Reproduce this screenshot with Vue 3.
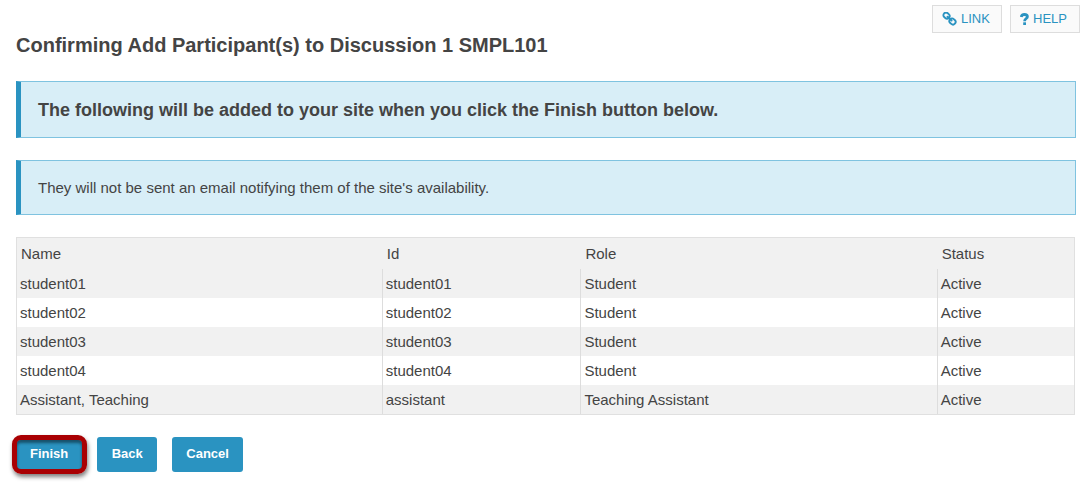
<script setup>
const columns = ['Name', 'Id', 'Role', 'Status']

const participants = [
  { name: 'student01', id: 'student01', role: 'Student', status: 'Active' },
  { name: 'student02', id: 'student02', role: 'Student', status: 'Active' },
  { name: 'student03', id: 'student03', role: 'Student', status: 'Active' },
  { name: 'student04', id: 'student04', role: 'Student', status: 'Active' },
  { name: 'Assistant, Teaching', id: 'assistant', role: 'Teaching Assistant', status: 'Active' }
]
</script>

<template>
  <main class="page">
    <header class="top">
      <h1 class="title">Confirming Add Participant(s) to Discussion 1 SMPL101</h1>
      <nav class="tools">
        <a class="tool" href="#link">
          <svg class="icon" width="15" height="15" viewBox="0 0 15 15" fill="none" stroke="currentColor" stroke-width="1.9" aria-hidden="true">
            <rect x="1.300" y="1" width="6.400" height="5.200" rx="2.500" transform="rotate(42 4.500 3.600)" />
            <rect x="7.300" y="6.900" width="6.400" height="5.200" rx="2.500" transform="rotate(42 10.500 9.500)" />
            <path d="M5.500 4.700l4.100 3.800" stroke-linecap="round" />
          </svg>
          <span>LINK</span>
        </a>
        <a class="tool" href="#help">
          <svg class="icon" width="9" height="13" viewBox="0 0 9 13" fill="none" stroke="currentColor" stroke-width="2.8" aria-hidden="true">
            <path d="M1.200 4C1.600 2.300 2.700 1.500 4.300 1.500c1.800 0 3.100.9 3.100 2.300C7.400 5.500 4.600 5.600 4.600 8.200" />
            <path d="M4.600 9.300v2.700" />
          </svg>
          <span>HELP</span>
        </a>
      </nav>
    </header>

    <section class="notice">
      <h2 class="lead">The following will be added to your site when you click the Finish button below.</h2>
    </section>
    <section class="notice">
      <p class="detail">They will not be sent an email notifying them of the site's availability.</p>
    </section>

    <table class="list">
      <colgroup>
        <col class="col-name" />
        <col class="col-id" />
        <col class="col-role" />
        <col class="col-status" />
      </colgroup>
      <thead>
        <tr>
          <th v-for="column in columns" :key="column" scope="col">{{ column }}</th>
        </tr>
      </thead>
      <tbody>
        <tr v-for="person in participants" :key="person.name">
          <td>{{ person.name }}</td>
          <td>{{ person.id }}</td>
          <td>{{ person.role }}</td>
          <td>{{ person.status }}</td>
        </tr>
      </tbody>
    </table>

    <div class="actions">
      <button type="button" class="button highlighted">Finish</button>
      <button type="button" class="button">Back</button>
      <button type="button" class="button">Cancel</button>
    </div>
  </main>
</template>

<style>
body {
  background: #fff;
}
</style>

<style scoped>
.page {
  padding: 5px 16px 12px;
  color: #444;
  font-family: "Liberation Sans", Arial, sans-serif;
  font-size: 15px;
  line-height: 20px;
}

.top {
  display: flex;
  justify-content: space-between;
  align-items: flex-start;
  gap: 16px;
  margin-right: -4px;
  margin-bottom: 24px;
}

.title {
  margin: 28px 0 0;
  font-size: 20px;
  line-height: 24px;
}

.tools {
  display: flex;
  gap: 8px;
}

.tool {
  display: flex;
  align-items: center;
  gap: 4px;
  min-width: 50px;
  padding: 3px 9px;
  border: 1px solid #ddd;
  background: #fafafa;
  color: #2a93c1;
  font-size: 13px;
  text-decoration: none;
}

.icon {
  flex: none;
}

.notice {
  margin-bottom: 22px;
  padding: 17px;
  border: 1px solid #7fc3e0;
  border-left: 5px solid #2a93c1;
  background: #d8eef7;
}

.lead {
  margin: 0;
  padding-top: 1px;
  font-size: 18px;
  line-height: 20px;
}

.detail {
  margin: 0;
  line-height: 19px;
}

.list {
  width: calc(100% - 1px);
  border: 1px solid #e0e0e0;
  border-collapse: separate;
  border-spacing: 0;
  table-layout: fixed;
}

.col-name {
  width: 34.6%;
}

.col-id {
  width: 18.8%;
}

.col-role {
  width: 33.7%;
}

.col-status {
  width: 12.9%;
}

.list th {
  padding: 6px 4px 5px;
  background: #f1f1f1;
  font-weight: normal;
  text-align: left;
}

.list td {
  padding: 5px 3px 4px;
  border-right: 1px solid #ddd;
}

.list td:last-child {
  border-right: 0;
}

.list tbody tr:nth-child(odd) {
  background: #f1f1f1;
}

.actions {
  display: flex;
  gap: 15px;
  margin-top: 22px;
}

.button {
  position: relative;
  min-width: 60px;
  height: 35px;
  padding: 0 14px 2px;
  border: 0;
  border-radius: 3px;
  background: #2a93c1;
  color: #fff;
  font-family: inherit;
  font-size: 13px;
  font-weight: bold;
}

.highlighted::after {
  content: "";
  position: absolute;
  inset: -2px -5px -2px -4px;
  border: 5px solid #a90003;
  border-radius: 9px;
  box-shadow: 1px 3px 4px rgba(0, 0, 0, 0.5), inset 0 3px 3px rgba(0, 0, 0, 0.45);
}
</style>
